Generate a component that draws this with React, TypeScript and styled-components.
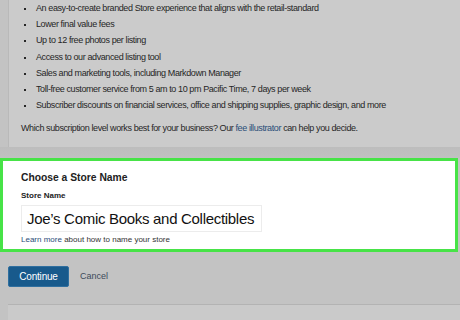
import { createGlobalStyle, styled } from 'styled-components';

const GlobalStyle = createGlobalStyle`
  html, body {
    margin: 0;
    padding: 0;
    width: 460px;
    height: 320px;
    overflow: hidden;
    background: #c3c3c3;
    font-family: 'Liberation Sans', Arial, sans-serif;
    color: #222;
  }
`;

const benefits = [
  'An easy-to-create branded Store experience that aligns with the retail-standard',
  'Lower final value fees',
  'Up to 12 free photos per listing',
  'Access to our advanced listing tool',
  'Sales and marketing tools, including Markdown Manager',
  'Toll-free customer service from 5 am to 10 pm Pacific Time, 7 days per week',
  'Subscriber discounts on financial services, office and shipping supplies, graphic design, and more',
];

export default function App() {
  return (
    <>
      <GlobalStyle />
      <Page>
        <InfoPanel>
          <BenefitList>
            {benefits.map((b) => (
              <li key={b}>{b}</li>
            ))}
          </BenefitList>
          <Question>
            Which subscription level works best for your business? Our <Link>fee illustrator</Link> can help you
            decide.
          </Question>
        </InfoPanel>
        <Shade />
        <NameCard>
          <CardTitle>Choose a Store Name</CardTitle>
          <FieldLabel>Store Name</FieldLabel>
          <NameInput>Joe’s Comic Books and Collectibles</NameInput>
          <Hint>
            <Link>Learn more</Link> about how to name your store
          </Hint>
        </NameCard>
        <Actions>
          <PrimaryButton>Continue</PrimaryButton>
          <TextButton>Cancel</TextButton>
        </Actions>
        <NextPanel />
      </Page>
    </>
  );
}

const Page = styled.div`
  display: flex;
  flex-direction: column;
  width: 460px;
  height: 320px;
`;

const InfoPanel = styled.div`
  margin-left: 8px;
  height: 147px;
  box-sizing: border-box;
  background: #cbcbcb;
  border-left: 1px solid #b9b9b9;
`;

const Shade = styled.div`
  height: 11px;
  background: linear-gradient(#bdbdbd, #c1c1c1);
`;

const BenefitList = styled.ul`
  margin: 0;
  padding: 0 0 0 26px;
  list-style: square;
  font-size: 9px;
  letter-spacing: -0.4px;
  line-height: 16.2px;
  color: #262626;
  white-space: nowrap;
  li {
    padding-left: 1px;
  }
  li::marker {
    font-size: 8px;
  }
`;

const Question = styled.p`
  margin: 8px 0 0 12px;
  font-size: 9px;
  letter-spacing: -0.4px;
  line-height: 14px;
  color: #262626;
  white-space: nowrap;
`;

const Link = styled.span`
  color: #2a4d78;
`;

const NameCard = styled.div`
  width: 458px;
  height: 94px;
  box-sizing: border-box;
  background: #fff;
  border: 3px solid #47e347;
  padding: 10px 0 0 18px;
  display: flex;
  flex-direction: column;
  align-items: flex-start;
`;

const CardTitle = styled.div`
  font-size: 10.3px;
  font-weight: bold;
  color: #222;
  line-height: 14px;
`;

const FieldLabel = styled.div`
  margin-top: 5px;
  font-size: 8px;
  font-weight: bold;
  color: #222;
  line-height: 11px;
`;

const NameInput = styled.div`
  margin-top: 4px;
  width: 241px;
  height: 27px;
  box-sizing: border-box;
  border: 1px solid #ececec;
  padding-left: 5px;
  font-size: 15px;
  letter-spacing: -0.3px;
  line-height: 25px;
  color: #111;
  white-space: nowrap;
`;

const Hint = styled.div`
  margin-top: 2px;
  font-size: 8px;
  line-height: 11px;
  color: #333;
`;

const Actions = styled.div`
  display: flex;
  align-items: flex-start;
  gap: 11px;
  padding: 14px 0 0 8px;
  height: 52px;
  box-sizing: border-box;
`;

const PrimaryButton = styled.div`
  width: 61px;
  height: 21px;
  box-sizing: border-box;
  background: #185a8c;
  border: 1px solid #2f6f9f;
  border-radius: 2px;
  color: #fff;
  font-size: 10px;
  letter-spacing: -0.2px;
  line-height: 19px;
  text-align: center;
`;

const TextButton = styled.div`
  font-size: 9px;
  line-height: 21px;
  color: #3d4a5a;
`;

const NextPanel = styled.div`
  margin-left: 8px;
  flex: 1;
  background: #cacaca;
  border-top: 1px solid #b3b3b3;
`;
